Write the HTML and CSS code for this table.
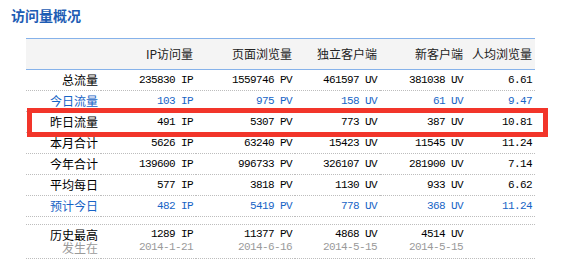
FILE: index.html
```html
<!DOCTYPE html>
<html lang="zh-CN">
<head>
<meta charset="utf-8">
<title>访问量概况</title>
<link rel="stylesheet" href="styles.css">
</head>
<body>
<h2 class="title">访问量概况</h2>
<div class="panel">
  <table class="stats">
    <colgroup>
      <col class="c-label"><col class="c-ip"><col class="c-pv"><col class="c-uv"><col class="c-new"><col class="c-avg">
    </colgroup>
    <thead>
      <tr><th></th><th>IP访问量</th><th>页面浏览量</th><th>独立客户端</th><th>新客户端</th><th>人均浏览量</th></tr>
    </thead>
    <tbody>
      <tr><td class="label">总流量</td><td class="num">235830 IP</td><td class="num">1559746 PV</td><td class="num">461597 UV</td><td class="num">381038 UV</td><td class="num">6.61</td></tr>
      <tr class="blue"><td class="label">今日流量</td><td class="num">103 IP</td><td class="num">975 PV</td><td class="num">158 UV</td><td class="num">61 UV</td><td class="num">9.47</td></tr>
      <tr><td class="label">昨日流量</td><td class="num">491 IP</td><td class="num">5307 PV</td><td class="num">773 UV</td><td class="num">387 UV</td><td class="num">10.81</td></tr>
      <tr><td class="label">本月合计</td><td class="num">5626 IP</td><td class="num">63240 PV</td><td class="num">15423 UV</td><td class="num">11545 UV</td><td class="num">11.24</td></tr>
      <tr><td class="label">今年合计</td><td class="num">139600 IP</td><td class="num">996733 PV</td><td class="num">326107 UV</td><td class="num">281900 UV</td><td class="num">7.14</td></tr>
      <tr><td class="label">平均每日</td><td class="num">577 IP</td><td class="num">3818 PV</td><td class="num">1130 UV</td><td class="num">933 UV</td><td class="num">6.62</td></tr>
      <tr class="blue"><td class="label">预计今日</td><td class="num">482 IP</td><td class="num">5419 PV</td><td class="num">778 UV</td><td class="num">368 UV</td><td class="num">11.24</td></tr>
      <tr class="spacer"><td colspan="6"><div class="gap"></div></td></tr>
      <tr class="record">
        <td class="label">历史最高<br><span class="muted">发生在</span></td>
        <td class="num">1289 IP<br><span class="muted">2014-1-21</span></td>
        <td class="num">11377 PV<br><span class="muted">2014-6-16</span></td>
        <td class="num">4868 UV<br><span class="muted">2014-5-15</span></td>
        <td class="num">4514 UV<br><span class="muted">2014-5-15</span></td>
        <td class="num"></td>
      </tr>
    </tbody>
  </table>
  <div class="highlight"></div>
</div>
</body>
</html>
```

FILE: styles.css
```css
html, body {
  margin: 0;
  padding: 0;
  background: #ffffff;
}

body {
  font-family: "Noto Sans CJK SC", "Noto Sans", sans-serif;
  font-size: 12px;
  color: #000;
}

.title {
  margin: 6px 0 0 11px;
  font-size: 14px;
  line-height: 18px;
  font-weight: bold;
  color: #1d5cb4;
}

.panel {
  position: relative;
  margin: 14px 0 0 26px;
  width: 509px;
}

.stats {
  width: 509px;
  table-layout: fixed;
  border-collapse: separate;
  border-spacing: 0;
}

.c-label { width: 75px; }
.c-ip { width: 95px; }
.c-pv { width: 99px; }
.c-uv { width: 85px; }
.c-new { width: 86px; }
.c-avg { width: 69px; }

.stats th {
  background: #f4f4f4;
  border-top: 1px solid #86b2ea;
  border-bottom: 1px solid #86b2ea;
  padding: 0 3px 0 0;
  line-height: 30px;
  font-weight: normal;
  text-align: right;
  color: #222;
  white-space: nowrap;
}

.stats td {
  padding: 0 3px 0 0;
  line-height: 20px;
  border-bottom: 1px dotted #bdbdbd;
  text-align: right;
  white-space: nowrap;
  vertical-align: middle;
}

.stats td.num {
  font-family: "Liberation Mono", "DejaVu Sans Mono", monospace;
  font-size: 11px;
  letter-spacing: -0.6px;
}

.stats tr.blue td {
  color: #1764c6;
}

.stats tr.spacer td {
  padding: 0;
  line-height: 0;
}

.gap {
  height: 7px;
}

.stats tr.record td {
  line-height: 13px;
  padding: 3px 3px 4px 0;
  vertical-align: top;
}

.muted {
  color: #9a9a9a;
}

.highlight {
  position: absolute;
  left: 1px;
  top: 70px;
  width: 511px;
  height: 19px;
  border: 5px solid #f2352a;
  pointer-events: none;
}
```
